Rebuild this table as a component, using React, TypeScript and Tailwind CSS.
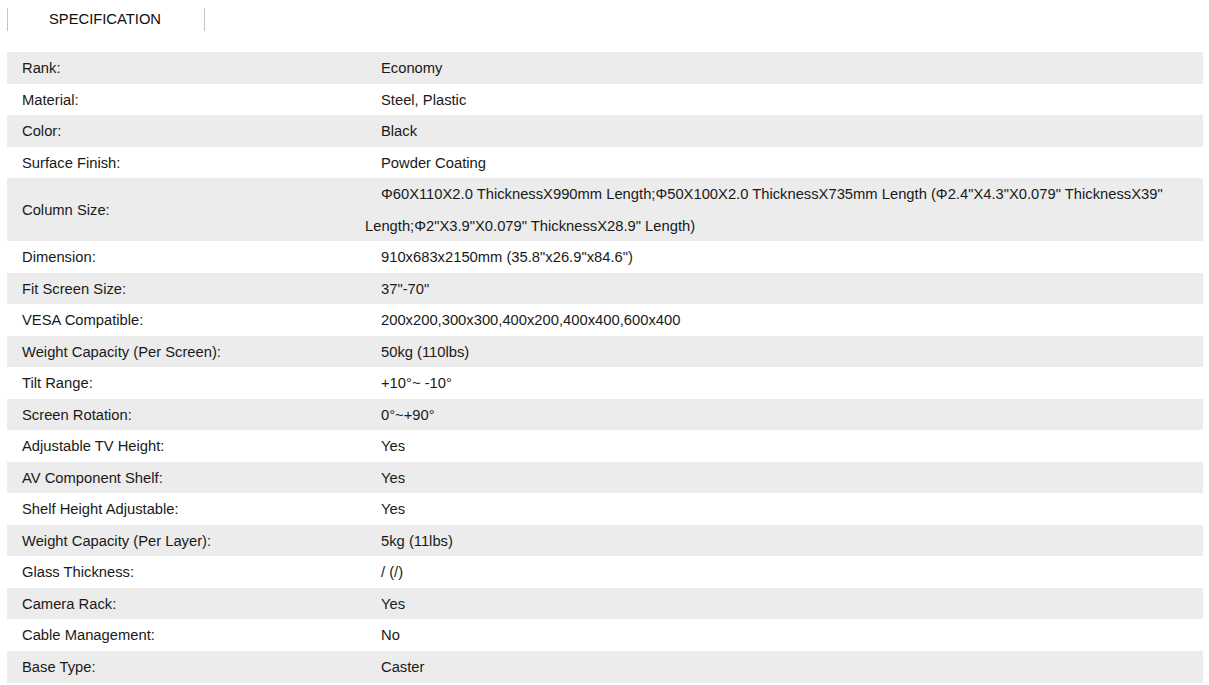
import React from "react";

const rows: [string, string][] = [
  ["Rank:", "Economy"],
  ["Material:", "Steel, Plastic"],
  ["Color:", "Black"],
  ["Surface Finish:", "Powder Coating"],
  [
    "Column Size:",
    "Φ60X110X2.0 ThicknessX990mm Length;Φ50X100X2.0 ThicknessX735mm Length (Φ2.4\"X4.3\"X0.079\" ThicknessX39\" Length;Φ2\"X3.9\"X0.079\" ThicknessX28.9\" Length)",
  ],
  ["Dimension:", "910x683x2150mm (35.8\"x26.9\"x84.6\")"],
  ["Fit Screen Size:", "37\"-70\""],
  ["VESA Compatible:", "200x200,300x300,400x200,400x400,600x400"],
  ["Weight Capacity (Per Screen):", "50kg (110lbs)"],
  ["Tilt Range:", "+10°~ -10°"],
  ["Screen Rotation:", "0°~+90°"],
  ["Adjustable TV Height:", "Yes"],
  ["AV Component Shelf:", "Yes"],
  ["Shelf Height Adjustable:", "Yes"],
  ["Weight Capacity (Per Layer):", "5kg (11lbs)"],
  ["Glass Thickness:", "/ (/)"],
  ["Camera Rack:", "Yes"],
  ["Cable Management:", "No"],
  ["Base Type:", "Caster"],
];

export default function App() {
  return (
    <div
      className="bg-white text-[14.75px] text-[#1a1a1a] w-[1209px] h-[685px] overflow-hidden"
      style={{ fontFamily: '"Liberation Sans", Arial, sans-serif' }}
    >
      <div className="pl-[7px] pt-[8px]">
        <div className="flex items-center h-[23px]">
          <div className="w-px h-full bg-[#c4c4c4]" />
          <div className="w-[196px] pl-[41px] leading-[23px] text-[#111]">SPECIFICATION</div>
          <div className="w-px h-full bg-[#c4c4c4]" />
        </div>
      </div>
      <div className="mt-[21px] ml-[7px] w-[1196px] flex flex-col">
        {rows.map(([k, v], i) => (
          <div
            key={k}
            className={`flex items-center leading-[31.5px] pt-[1px] ${i % 2 === 0 ? "bg-[#ececec]" : "bg-white"}`}
            style={{ marginTop: i === 0 ? 0 : -1 }}
          >
            <div className="w-[358px] shrink-0 pl-[15px]">{k}</div>
            <div className="flex-1 indent-[16px] pr-[20px]">{v}</div>
          </div>
        ))}
      </div>
    </div>
  );
}
